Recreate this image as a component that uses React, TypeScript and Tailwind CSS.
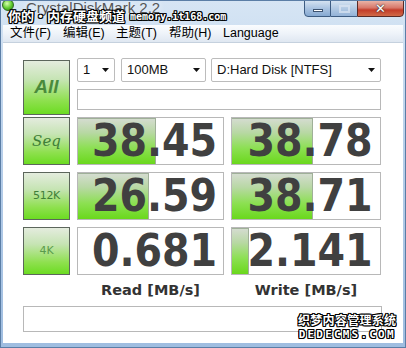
import React from 'react';

const outline =
  '[text-shadow:1px_0_0_#000,-1px_0_0_#000,0_1px_0_#000,0_-1px_0_#000,1px_1px_0_#000,-1px_-1px_0_#000,1px_-1px_0_#000,-1px_1px_0_#000]';

function Arrow() {
  return (
    <svg width="7" height="4" viewBox="0 0 7 4" className="shrink-0">
      <path d="M0 0h7L3.5 4z" fill="#111" />
    </svg>
  );
}

function Select({ label, w }: { label: string; w: string }) {
  return (
    <div className={`${w} h-[24px] border border-[#bcbcbc] rounded-[2px] bg-white flex items-center pl-[5px] pr-[5px] justify-between`}>
      <span className="text-[13px] text-[#111] font-['Liberation_Sans',sans-serif]">{label}</span>
      <Arrow />
    </div>
  );
}

function TestButton({ children, h }: { children: React.ReactNode; h: string }) {
  return (
    <div className={`w-[47px] ${h} shrink-0 border border-[#5c665c] bg-[linear-gradient(180deg,#e4ecde_0%,#c6e4b4_35%,#8ee04e_75%,#6cdc22_100%)] flex items-center justify-center`}>
      {children}
    </div>
  );
}

function Result({ value, w, fill }: { value: string; w: string; fill: number }) {
  return (
    <div className={`${w} h-[48px] relative border border-[#b8b8b8] bg-white flex items-center justify-center pl-[8px]`}>
      {fill > 0 && (
        <div
          className="absolute left-0 top-0 bottom-0 border-t border-r border-[#9fb098] bg-[linear-gradient(180deg,#d4dccf_0%,#b8d8a4_30%,#8ce052_65%,#6ad81c_100%)]"
          style={{ width: fill }}
        />
      )}
      <span className="relative text-[44px] leading-none font-bold text-[#404040] font-['DejaVu_Sans_Condensed','DejaVu_Sans',sans-serif]">
        {value}
      </span>
    </div>
  );
}

export default function App() {
  return (
    <div className="w-[406px] h-[348px] relative overflow-hidden flex flex-col bg-[linear-gradient(180deg,#d6e5f4_0%,#b9d0ea_40%,#9fbde0_100%)] border border-[#5b7ea6]">
      {/* title bar */}
      <div className="h-[24px] shrink-0 relative">
        <div className="absolute left-[1px] top-[-2px] w-[12px] h-[12px] rounded-full bg-[radial-gradient(circle_at_40%_35%,#d8ffb0_0%,#5cc82a_55%,#2a7a18_100%)] border border-[#2f6a20]" />
        <div className="absolute left-[25px] top-[-4px] text-[15px] text-[#555] font-['Liberation_Sans',sans-serif] [text-shadow:0_0_6px_#fff]">
          CrystalDiskMark 2.2
        </div>
        <div className={`absolute left-[7px] top-[8px] flex items-end gap-[5px] text-white ${outline}`}>
          <span className="text-[13px] font-bold leading-none font-['Noto_Sans_CJK_SC',sans-serif]">你的·内存硬盘频道</span>
          <span className="text-[10px] font-bold leading-none font-['DejaVu_Sans_Mono',monospace]">memory.it168.com</span>
        </div>
        <div className="absolute right-[1px] top-[-1px] flex">
          <div className="w-[27px] h-[17px] border border-[#3d5c82] rounded-bl-[4px] bg-[linear-gradient(180deg,#d4e2f1_0%,#a9c3e1_50%,#86a9d2_100%)] flex items-center justify-center">
            <div className="w-[10px] h-[3px] mt-[4px] bg-white border border-[#3d5370]" />
          </div>
          <div className="w-[26px] h-[17px] border-y border-[#3d5c82] bg-[linear-gradient(180deg,#d4e2f1_0%,#b1c9e3_50%,#94b3d8_100%)] flex items-center justify-center">
            <div className="w-[11px] h-[8px] border-2 border-[#dbe6f2] opacity-70" />
          </div>
          <div className="w-[47px] h-[17px] border border-[#5a2a26] rounded-br-[4px] bg-[linear-gradient(180deg,#e9b3a6_0%,#d8786a_45%,#c33d2a_60%,#d06a48_100%)] flex items-center justify-center">
            <span className="text-[13px] font-bold leading-none text-white font-['DejaVu_Sans',sans-serif] [text-shadow:0_0_1px_#333,0_0_2px_#333]">✕</span>
          </div>
        </div>
      </div>

      <div className="flex-1 mx-[2px] mb-[4px] bg-white flex flex-col">
        {/* menu bar */}
        <div className="h-[18px] shrink-0 flex items-center gap-[11px] pl-[7px] bg-[linear-gradient(180deg,#fafcfe_0%,#eef3f9_50%,#dfe7f1_100%)] border-b border-[#c5d1de] text-[12.5px] text-black font-['Liberation_Sans','Noto_Sans_CJK_SC',sans-serif]">
          <span className="w-[42px]">文件(F)</span>
          <span className="w-[42px]">编辑(E)</span>
          <span className="w-[42px]">主题(T)</span>
          <span className="w-[43px]">帮助(H)</span>
          <span>Language</span>
        </div>

        {/* client */}
        <div className="flex-1 flex flex-col pl-[20px] pt-[15px]">
          <div className="flex gap-[7px] items-start">
            <div className="mt-[2px]">
              <TestButton h="h-[55px]">
                <span className="text-[19px] font-bold italic text-[#4a8a3c] font-['Liberation_Sans',sans-serif]">All</span>
              </TestButton>
            </div>
            <div className="w-[304px] flex flex-col">
              <div className="flex">
                <Select label="1" w="w-[38px]" />
                <div className="ml-[6px]">
                  <Select label="100MB" w="w-[85px]" />
                </div>
                <div className="ml-[5px]">
                  <Select label="D:Hard Disk [NTFS]" w="w-[170px]" />
                </div>
              </div>
              <div className="mt-[7px] h-[21px] border border-[#b8b8b8] bg-white" />
            </div>
          </div>

          <div className="mt-[2px] flex gap-[7px]">
            <TestButton h="h-[48px]">
              <span className="text-[15px] italic text-[#3f7f38] font-['DejaVu_Serif',serif]">Seq</span>
            </TestButton>
            <Result value="38.45" w="w-[147px]" fill={78} />
            <Result value="38.78" w="w-[150px]" fill={81} />
          </div>

          <div className="mt-[7px] flex gap-[7px]">
            <TestButton h="h-[48px]">
              <span className="text-[11px] text-[#3f7f38] font-['DejaVu_Sans',sans-serif] tracking-[-0.3px]">512K</span>
            </TestButton>
            <Result value="26.59" w="w-[147px]" fill={71} />
            <Result value="38.71" w="w-[150px]" fill={81} />
          </div>

          <div className="mt-[7px] flex gap-[7px]">
            <TestButton h="h-[48px]">
              <span className="text-[11px] text-[#5a9a4c] font-['DejaVu_Sans',sans-serif]">4K</span>
            </TestButton>
            <Result value="0.681" w="w-[147px]" fill={0} />
            <Result value="2.141" w="w-[150px]" fill={17} />
          </div>

          <div className="h-[31px] flex gap-[7px] items-center text-[14.5px] font-bold text-[#333] font-['DejaVu_Sans',sans-serif]">
            <div className="w-[47px]" />
            <div className="w-[147px] text-center">Read [MB/s]</div>
            <div className="w-[150px] text-center">Write [MB/s]</div>
          </div>

          <div className="w-[359px] h-[26px] border border-[#b8b8b8] bg-white" />
        </div>
      </div>

      {/* watermark */}
      <div className={`absolute left-[297px] top-[313px] flex flex-col items-center text-white leading-none ${outline}`}>
        <span className="text-[12px] font-bold tracking-[0.3px] font-['Noto_Sans_CJK_SC',sans-serif]">织梦内容管理系统</span>
        <span className="mt-[3px] text-[11px] font-bold tracking-[2.2px] font-['DejaVu_Sans_Mono',monospace]">DEDECMS.COM</span>
      </div>
    </div>
  );
}
